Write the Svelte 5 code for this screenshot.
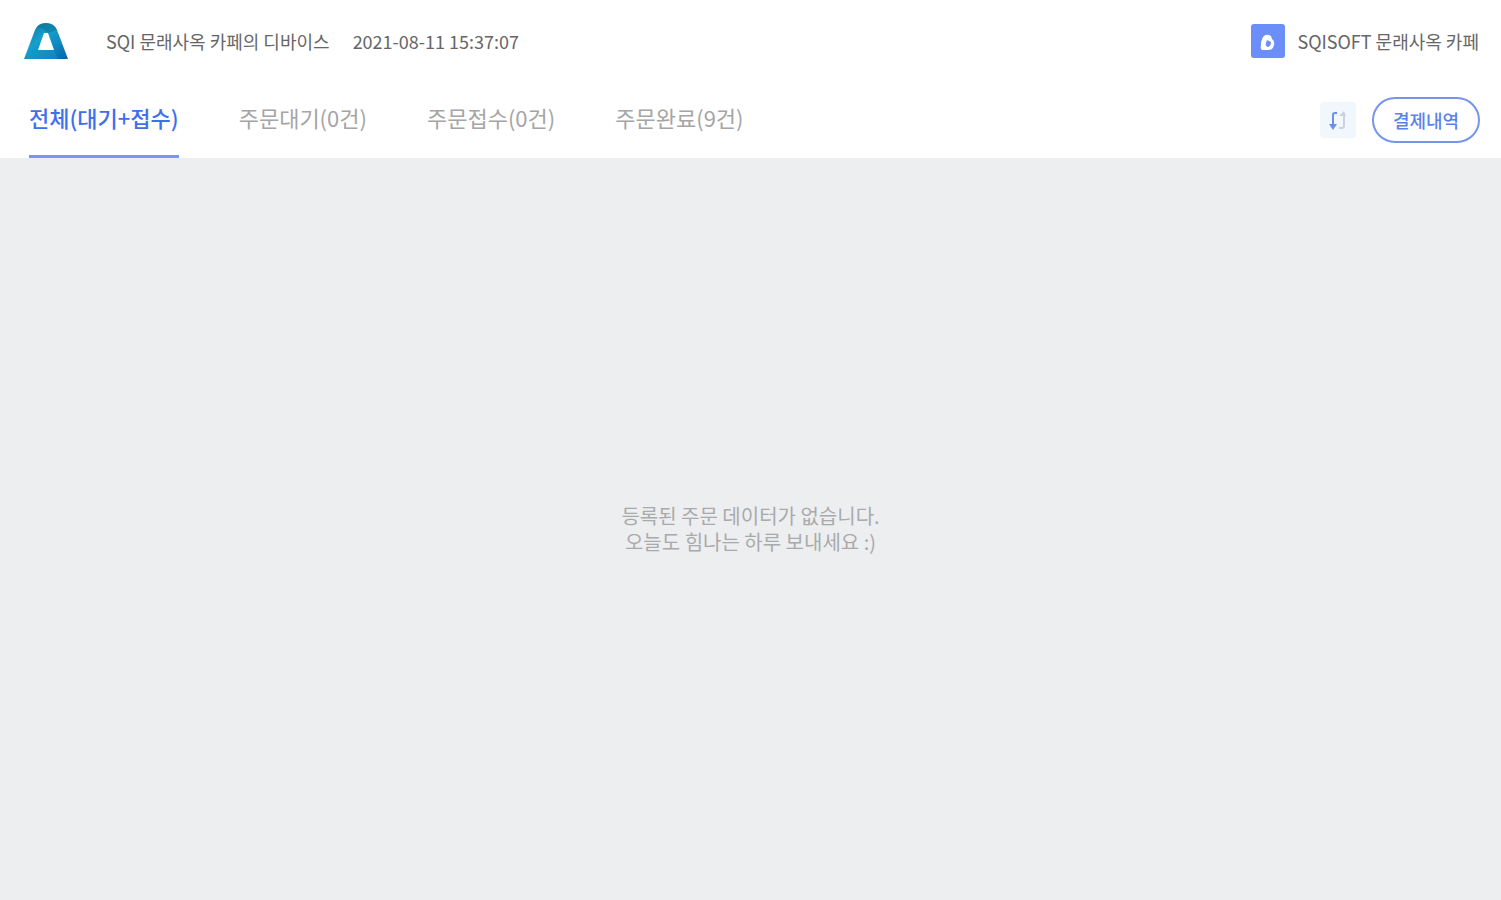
<script>
    const tabs = [
        { id: 'all', title: '전체(대기+접수)' },
        { id: 'waiting', title: '주문대기(0건)' },
        { id: 'accepted', title: '주문접수(0건)' },
        { id: 'done', title: '주문완료(9건)' },
    ]

    let selected = $state('all')
</script>

<div class="page">
    <header>
        <svg class="logo" viewBox="0 0 46 38" aria-hidden="true">
            <defs>
                <linearGradient id="logo-fill" x1="0" y1="0" x2="1" y2="1">
                    <stop offset="0" stop-color="#0a6f9f" />
                    <stop offset="0.4" stop-color="#17a0ca" />
                    <stop offset="0.7" stop-color="#0d86bf" />
                    <stop offset="1" stop-color="#0760a6" />
                </linearGradient>
            </defs>
            <path
                d="M1 37 L12 8 Q15 1 23 1 Q31 1 34 8 L45 37 Z M21 11 L15 28 H31 L25 11 Z"
                fill="url(#logo-fill)"
                fill-rule="evenodd" />
            <path d="M14 5 Q17 1 23 1 Q31 1 34 8 L25 11 L20 7 Z" fill="#0b7399" opacity="0.6" />
            <path d="M1 37 L15 28 H31 L35 37 Z" fill="#1b93cb" opacity="0.5" />
        </svg>
        <span class="device">SQI 문래사옥 카페의 디바이스</span>
        <time datetime="2021-08-11T15:37:07">2021-08-11 15:37:07</time>
        <div class="store">
            <svg viewBox="0 0 34 34" aria-hidden="true">
                <rect width="34" height="34" rx="3" fill="#6b8ef8" />
                <path
                    d="M10 18 L12 13 Q15 9 20 12 L21 15 Q24 17 23 21 Q22 26 17 26 H11 Q9 25 10 21 Z"
                    fill="#fff" />
                <path d="M16 16 L20 18 Q20 22 17 23 Q14 22 15 19 Z" fill="#6b8ef8" />
            </svg>
            <span>SQISOFT 문래사옥 카페</span>
        </div>
    </header>

    <nav>
        <div class="tabs">
            {#each tabs as tab (tab.id)}
                <button
                    class="tab"
                    class:active={tab.id === selected}
                    onclick={() => (selected = tab.id)}>
                    {tab.title}
                </button>
            {/each}
        </div>
        <button class="sort" aria-label="정렬">
            <svg viewBox="0 0 36 36" aria-hidden="true">
                <path d="M17 11 H15 Q13 11 13 13 V24" fill="none" stroke="#6c8fee" stroke-width="2" />
                <path d="M9 22 H17 L13 28 Z" fill="#6c8fee" />
                <path d="M19 26 H22 Q24 26 24 24 V12" fill="none" stroke="#cdd1dc" stroke-width="2" />
                <path d="M19 14 H26 L24 9 Z" fill="#cdd1dc" />
            </svg>
        </button>
        <button class="payments">결제내역</button>
    </nav>

    <main>
        <p>등록된 주문 데이터가 없습니다.<br />오늘도 힘나는 하루 보내세요 :)</p>
    </main>
</div>

<style>
    :global(body) {
        margin: 0;
    }

    .page {
        display: flex;
        flex-direction: column;
        min-height: 100vh;
        background: #edeef0;
        font-family: 'Noto Sans CJK KR', sans-serif;
    }

    button {
        padding: 0;
        border: 0;
        background: none;
        font-family: inherit;
        cursor: pointer;
    }

    header {
        display: flex;
        align-items: center;
        height: 82px;
        padding: 0 22px 0 23px;
        background: #fff;
        color: #666;
        font-size: 18px;
        line-height: 24px;
    }

    .logo {
        width: 46px;
        height: 38px;
        margin-right: 37px;
    }

    time {
        margin-left: 23px;
    }

    .store {
        display: flex;
        align-items: center;
        gap: 12px;
        margin-left: auto;
    }

    .store svg {
        width: 34px;
        height: 34px;
    }

    nav {
        display: flex;
        align-items: center;
        height: 76px;
        padding: 0 21px 0 29px;
        background: #fff;
    }

    .tabs {
        display: flex;
        align-self: stretch;
        gap: 60px;
        margin-right: auto;
    }

    .tab {
        padding-bottom: 4px;
        border-bottom: 3px solid transparent;
        color: #a5a5a5;
        font-size: 22px;
        line-height: 32px;
    }

    .tab.active {
        border-bottom-color: #7898f0;
        color: #3d70ee;
        font-weight: 500;
    }

    .sort {
        width: 36px;
        height: 36px;
        margin-right: 16px;
        border-radius: 4px;
        background: #f2f6fd;
    }

    .sort svg {
        display: block;
    }

    .payments {
        width: 108px;
        height: 46px;
        border: 2px solid #7595ec;
        border-radius: 23px;
        color: #5b82ea;
        font-size: 18px;
        font-weight: 500;
    }

    main {
        display: flex;
        flex: 1;
        align-items: center;
        justify-content: center;
    }

    p {
        margin: 0;
        color: #a9aaac;
        font-size: 20px;
        line-height: 26px;
        text-align: center;
    }
</style>
